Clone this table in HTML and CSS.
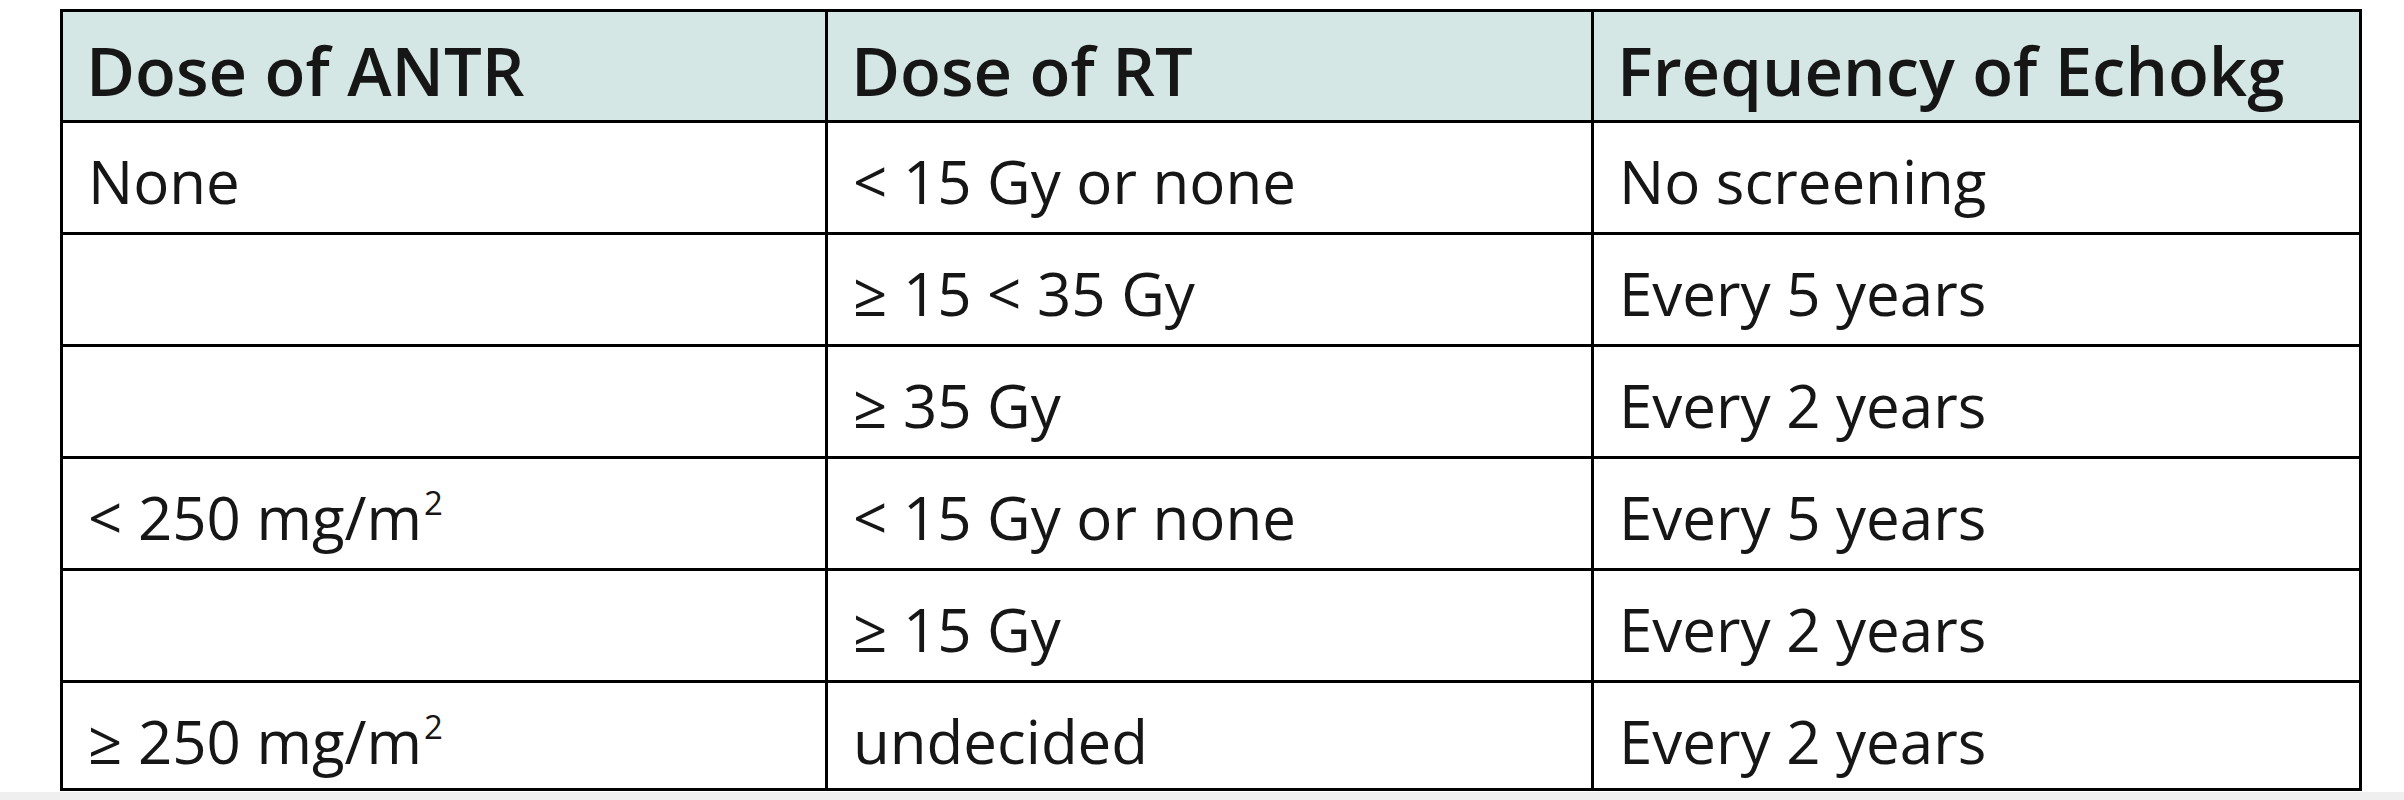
FILE: index.html
```html
<!DOCTYPE html>
<html lang="en">
<head>
<meta charset="utf-8">
<title>Echocardiography screening frequency</title>
<link rel="stylesheet" href="styles.css">
</head>
<body>
<div class="page">
  <div class="grid" role="table">
    <div class="cell head" role="columnheader">Dose of ANTR</div>
    <div class="cell head" role="columnheader">Dose of RT</div>
    <div class="cell head" role="columnheader">Frequency of Echokg</div>

    <div class="cell">None</div>
    <div class="cell">&lt; 15 Gy or none</div>
    <div class="cell">No screening</div>

    <div class="cell"></div>
    <div class="cell">≥ 15 &lt; 35 Gy</div>
    <div class="cell">Every 5 years</div>

    <div class="cell"></div>
    <div class="cell">≥ 35 Gy</div>
    <div class="cell">Every 2 years</div>

    <div class="cell">&lt; 250 mg/m<sup>2</sup></div>
    <div class="cell">&lt; 15 Gy or none</div>
    <div class="cell">Every 5 years</div>

    <div class="cell"></div>
    <div class="cell">≥ 15 Gy</div>
    <div class="cell">Every 2 years</div>

    <div class="cell">≥ 250 mg/m<sup>2</sup></div>
    <div class="cell">undecided</div>
    <div class="cell">Every 2 years</div>
  </div>
</div>
</body>
</html>
```
FILE: styles.css
```css
html, body {
  margin: 0;
  padding: 0;
  background: #ffffff;
}

.page {
  width: 2404px;
  height: 800px;
  padding: 9px 0 0 60px;
  box-sizing: border-box;
  background: linear-gradient(to bottom, #ffffff 0, #ffffff 792px, #efefef 792px);
}

.grid {
  display: grid;
  grid-template-columns: 765px 766px 768px;
  grid-template-rows: 111px repeat(5, 112px) 108px;
  width: 2302px;
  border-top: 3px solid #000;
  border-left: 3px solid #000;
  box-sizing: border-box;
  background: #ffffff;
  font-family: "Open Sans", "Noto Sans", sans-serif;
  color: #161616;
}

.cell {
  box-sizing: border-box;
  border-right: 3px solid #000;
  border-bottom: 3px solid #000;
  padding: 17px 0 0 25px;
  font-size: 60px;
  font-weight: 400;
  line-height: normal;
  white-space: nowrap;
}

.head {
  background: #d5e7e4;
  font-size: 67px;
  font-weight: 600;
  padding-top: 12px;
  padding-left: 23px;
}

.cell sup {
  font-size: 0.55em;
  vertical-align: 0;
  position: relative;
  top: -0.75em;
  margin-left: 2px;
}
```
